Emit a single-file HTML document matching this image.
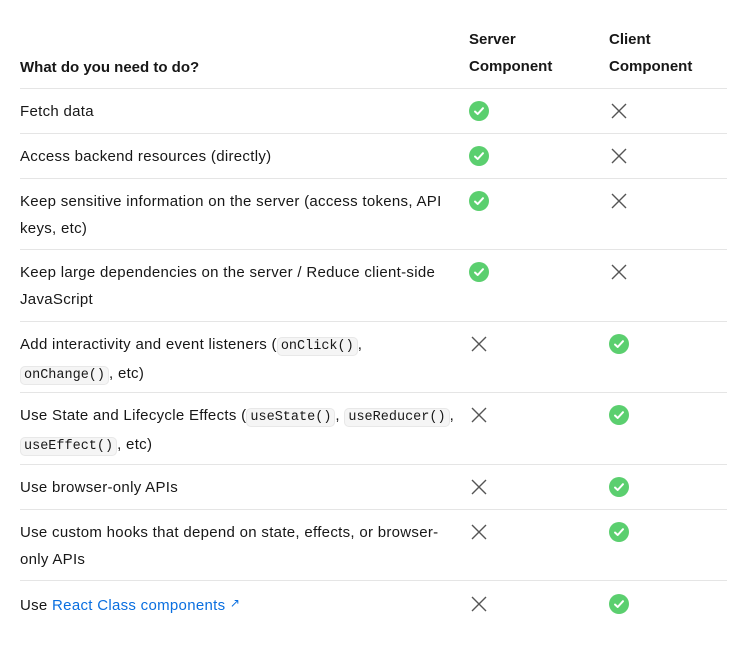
<!DOCTYPE html>
<html><head><meta charset="utf-8"><style>
body{margin:0;background:#fff;width:747px;height:645px;position:relative;font-family:"Liberation Sans",sans-serif;font-size:15px;color:#171717;overflow:hidden}
.t{position:absolute;left:20px;line-height:27px;white-space:nowrap;letter-spacing:0.3px}
.h{font-weight:bold;position:absolute;line-height:27px}
.ln{position:absolute;left:20px;width:707px;height:1px;background:#e5e5e5}
code{font-family:"Liberation Mono",monospace;font-size:13.5px;letter-spacing:0;background:#f5f5f5;border:1px solid #e8e8e8;border-radius:5px;padding:1px 3px}
a{color:#0a6fe0;text-decoration:none}
svg{position:absolute}
</style></head><body>
<div class="h" style="left:20px;top:54px">What do you need to do?</div>
<div class="h" style="left:469px;top:26px">Server<br>Component</div>
<div class="h" style="left:609px;top:26px">Client<br>Component</div>

<div class="ln" style="top:88px"></div>
<div class="ln" style="top:133px"></div>
<div class="ln" style="top:178px"></div>
<div class="ln" style="top:249px"></div>
<div class="ln" style="top:321px"></div>
<div class="ln" style="top:392px"></div>
<div class="ln" style="top:464px"></div>
<div class="ln" style="top:509px"></div>
<div class="ln" style="top:580px"></div>

<div class="t" style="top:98px">Fetch data</div>
<div class="t" style="top:143px">Access backend resources (directly)</div>
<div class="t" style="top:188px">Keep sensitive information on the server (access tokens, API<br>keys, etc)</div>
<div class="t" style="top:259px">Keep large dependencies on the server / Reduce client-side<br>JavaScript</div>
<div class="t" style="top:331px">Add interactivity and event listeners (<code>onClick()</code>,<br><code>onChange()</code>, etc)</div>
<div class="t" style="top:402px">Use State and Lifecycle Effects (<code>useState()</code>, <code>useReducer()</code>,<br><code>useEffect()</code>, etc)</div>
<div class="t" style="top:474px">Use browser-only APIs</div>
<div class="t" style="top:519px">Use custom hooks that depend on state, effects, or browser-<br>only APIs</div>
<div class="t" style="top:590px">Use <a>React Class components <span style="font-size:12px;vertical-align:3px">↗</span></a></div>

<svg width="747" height="645" style="left:0;top:0">
<defs>
<g id="c"><circle r="10" fill="#5bcf6f"/><path d="M-4 0.5 L-1.3 3 L4 -2.8" stroke="#fff" stroke-width="2" fill="none" stroke-linecap="round" stroke-linejoin="round"/></g>
<g id="x"><path d="M-7 -7 L7 7 M7 -7 L-7 7" stroke="#555" stroke-width="1.4" fill="none"/></g>
</defs>
<use href="#c" x="479" y="111"/><use href="#x" x="619" y="111"/>
<use href="#c" x="479" y="156"/><use href="#x" x="619" y="156"/>
<use href="#c" x="479" y="201"/><use href="#x" x="619" y="201"/>
<use href="#c" x="479" y="272"/><use href="#x" x="619" y="272"/>
<use href="#x" x="479" y="344"/><use href="#c" x="619" y="344"/>
<use href="#x" x="479" y="415"/><use href="#c" x="619" y="415"/>
<use href="#x" x="479" y="487"/><use href="#c" x="619" y="487"/>
<use href="#x" x="479" y="532"/><use href="#c" x="619" y="532"/>
<use href="#x" x="479" y="604"/><use href="#c" x="619" y="604"/>
</svg>
</body></html>
